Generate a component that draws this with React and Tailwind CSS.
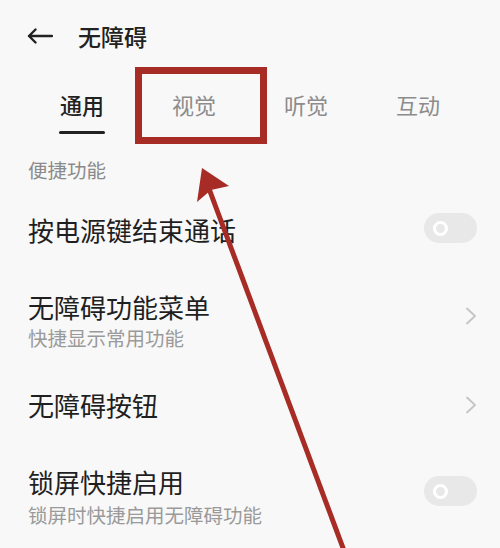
import React from "react";

const font = { fontFamily: '"Noto Sans CJK SC", "Noto Sans", sans-serif' };

function Toggle({ className = "" }) {
  return (
    <div className={`flex h-[30px] w-[53px] items-center rounded-full bg-[#e8e8e8] pl-[9px] ${className}`}>
      <div className="h-[15px] w-[15px] rounded-full border-[3px] border-white bg-[#e8e8e8]" />
    </div>
  );
}

function Chevron({ className = "" }) {
  return (
    <svg className={className} width="12" height="18" viewBox="0 0 12 18" fill="none">
      <path d="M2 1.5 L10 9 L2 16.5" stroke="#c4c4c4" strokeWidth="1.8" strokeLinecap="round" strokeLinejoin="round" />
    </svg>
  );
}

export default function App() {
  return (
    <div className="relative h-[548px] w-[500px] overflow-hidden bg-[#f8f8f8] text-[#1f1f1f]" style={font}>
      {/* header */}
      <div className="flex h-[72px] items-center pl-[27px]">
        <svg width="26" height="16" viewBox="0 0 26 16" fill="none">
          <path d="M25 8 H2 M8.5 1.5 L2 8 L8.5 14.5" stroke="#222" strokeWidth="2.4" strokeLinecap="round" strokeLinejoin="round" />
        </svg>
        <span className="ml-[25px] text-[23px] font-medium leading-[30px] text-[#222]">无障碍</span>
      </div>

      {/* tabs */}
      <div className="flex pl-[26px] pt-[17px]">
        {["通用", "视觉", "听觉", "互动"].map((t, i) => (
          <div key={t} className="flex w-[112px] flex-col items-center">
            <span className={`text-[22px] leading-[30px] ${i === 0 ? "font-medium text-[#222]" : "text-[#8c8c8c]"}`}>{t}</span>
            <div className={`mt-[12px] h-[3px] w-[46px] rounded-full ${i === 0 ? "bg-[#222]" : "bg-transparent"}`} />
          </div>
        ))}
      </div>

      {/* section */}
      <div className="mt-[24px] pl-[28px] text-[19.5px] leading-[24px] text-[#8a8a8a]">便捷功能</div>

      <div className="pl-[28px] pr-[23px]">
        {/* row 1 */}
        <div className="mt-[31px] flex items-start justify-between">
          <span className="text-[26px] leading-[34px]">按电源键结束通话</span>
          <Toggle />
        </div>

        {/* row 2 */}
        <div className="mt-[43px] flex items-start justify-between">
          <div className="flex flex-col">
            <span className="text-[26px] leading-[34px]">无障碍功能菜单</span>
            <span className="text-[19.5px] leading-[28px] text-[#9a9a9a]">快捷显示常用功能</span>
          </div>
          <Chevron className="mt-[17px]" />
        </div>

        {/* row 3 */}
        <div className="mt-[36px] flex items-center justify-between">
          <span className="text-[26px] leading-[34px]">无障碍按钮</span>
          <Chevron />
        </div>

        {/* row 4 */}
        <div className="mt-[43px] flex items-start justify-between">
          <div className="flex flex-col">
            <span className="text-[26px] leading-[34px]">锁屏快捷启用</span>
            <span className="mt-[2px] text-[19.5px] leading-[28px] text-[#9a9a9a]">锁屏时快捷启用无障碍功能</span>
          </div>
          <Toggle className="mt-[11px]" />
        </div>
      </div>

      {/* annotation overlay */}
      <svg className="pointer-events-none absolute left-0 top-0" width="500" height="548" viewBox="0 0 500 548">
        <rect x="138.5" y="70.5" width="125" height="70" fill="none" stroke="#a62c25" strokeWidth="7" />
        <line x1="208" y1="186" x2="346" y2="556" stroke="#a62c25" strokeWidth="5" />
        <polygon points="202,168 229,186 211,190 197,202" fill="#a62c25" />
      </svg>
    </div>
  );
}
